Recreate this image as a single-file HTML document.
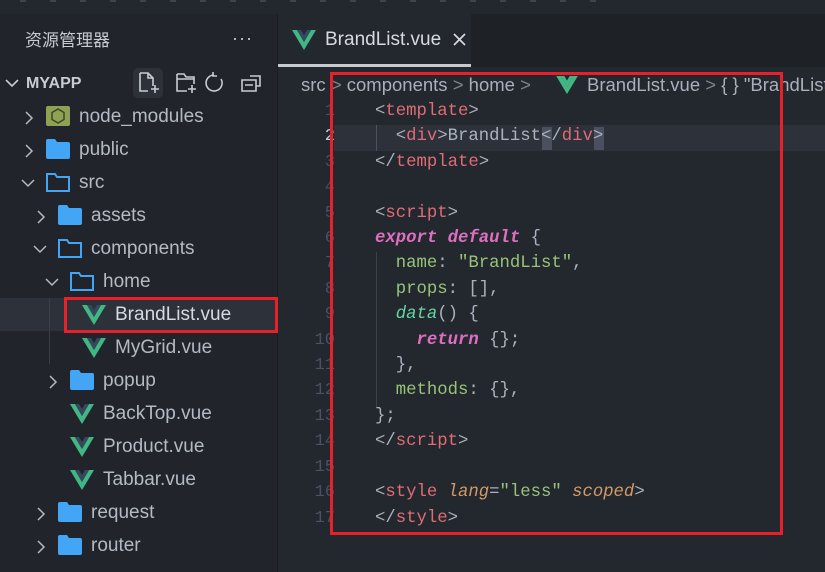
<!DOCTYPE html>
<html><head><meta charset="utf-8"><style>
*{margin:0;padding:0;box-sizing:border-box}
html,body{width:825px;height:572px;overflow:hidden}
body{background:#23272e;font-family:"Liberation Sans","Noto Sans CJK SC",sans-serif;position:relative;color:#b4bac4}
.abs{position:absolute}
#side{left:0;top:0;width:277px;height:572px;background:#21252b}
#top{left:0;top:0;width:825px;height:14px;background:#23272e}
.row{position:absolute;left:0;width:277px;height:33px;font-size:19px;line-height:33px;color:#b4bac4;white-space:nowrap}
.row svg{position:absolute}
.row span{position:absolute}
.chev{top:11px}
.code{position:absolute;left:375px;font-family:"Liberation Mono",monospace;font-size:17.3px;white-space:pre;color:#abb2bf;line-height:25.4px}
.t{color:#e06c75}.p{color:#abb2bf}.k{color:#de6fc0;font-style:italic;font-weight:bold}.g{color:#98c379}.s{color:#98c379}.a{color:#d19a66;font-style:italic}.f{color:#61d6a0;font-style:italic}
.ln{position:absolute;left:300px;width:35px;text-align:right;font-family:"Liberation Mono",monospace;font-size:17px;color:#495162;line-height:25.4px}
</style></head><body>
<div id="top" class="abs"></div>
<div class="abs" style="left:0;top:0;width:825px;height:4px;overflow:hidden"><div style="position:absolute;left:20px;top:-6px;width:600px;height:8px;background:repeating-linear-gradient(90deg,#6a707a 0 6px,transparent 6px 30px);opacity:.4"></div></div>
<div id="side" class="abs" style="top:14px;height:558px"></div>
<div class="abs" style="left:277px;top:14px;width:548px;height:53px;background:#1e2227"></div>
<div class="abs" style="left:277px;top:14px;width:1px;height:558px;background:#1a1d21"></div>
<!-- tab -->
<div class="abs" style="left:278px;top:14px;width:193px;height:53px;background:#23272e;border-bottom:3px solid #c6c9ce"></div>
<svg class="abs" style="left:292px;top:30px" width="24" height="20" viewBox="0 0 24 20"><path d="M0 0h5l7 12 7-12h5L12 20z" fill="#41b883"/><path d="M5 0h4l3 5 3-5h4l-7 12z" fill="#35495e"/></svg>
<div class="abs" style="left:325px;top:29px;font-size:19px;color:#d7dae0">BrandList.vue</div>
<svg class="abs" style="left:453px;top:33px" width="13" height="13"><path d="M1 1L12 12M12 1L1 12" stroke="#d7dae0" stroke-width="1.7"/></svg>
<!-- sidebar header -->
<div class="abs" style="left:25px;top:31px;font-size:17px;line-height:20px;color:#c8ccd2">资源管理器</div>
<div class="abs" style="left:232px;top:28px;font-size:18px;color:#c8ccd2;letter-spacing:1px">···</div>
<div class="row" style="top:67px;"><svg class="chev" style="left:4px;top:10px" width="16" height="12"><path d="M2 3l6 6 6-6" stroke="#c8ccd2" stroke-width="1.6" fill="none"/></svg><span style="left:26px;font-weight:bold;font-size:16px;color:#c8ccd2">MYAPP</span></div>
<div class="abs" style="left:133px;top:68px;width:30px;height:30px;border-radius:5px;background:#2d3139"></div>
<svg class="abs" style="left:137px;top:70px" width="130" height="26" viewBox="0 0 130 26" fill="none" stroke="#c8ccd2" stroke-width="1.6"><path d="M3 3h8l5 5v8M3 3v18h8M11 3v5h5M14 19h8M18 15v8"/><path d="M40 4h7l2 3h8v7M40 4v17h10M40 9h17M51 19h8M55 15v8"/><path d="M77 5a8 8 0 1 0 7 4M76 2v4h4" /><path d="M113 6h10v10h-4M105 10h14v11h-14zM108 15h8"/></svg>
<!-- tree -->
<div class="row" style="top:100px"><svg class="chev" style="left:24px" width="10" height="14"><path d="M2 1l6 6-6 6" stroke="#b4bac4" stroke-width="1.5" fill="none"/></svg><svg style="left:46px;top:6px" width="24" height="20"><rect width="24" height="20" rx="2" fill="#8fa155"/><path d="M12 3l6 3.5v7L12 17l-6-3.5v-7z" stroke="#3b4a1f" stroke-width="1.5" fill="none"/></svg><span style="left:79px">node_modules</span></div>
<div class="row" style="top:133px"><svg class="chev" style="left:24px" width="10" height="14"><path d="M2 1l6 6-6 6" stroke="#b4bac4" stroke-width="1.5" fill="none"/></svg><svg style="left:46px;top:6px" width="24" height="20"><path d="M0 2q0-2 2-2h7l2 3h11q2 0 2 2v13q0 2-2 2H2q-2 0-2-2z" fill="#42a5f5"/></svg><span style="left:79px">public</span></div>
<div class="row" style="top:166px"><svg class="chev" style="left:20px;top:12px" width="16" height="10"><path d="M2 2l6 6 6-6" stroke="#b4bac4" stroke-width="1.5" fill="none"/></svg><svg style="left:46px;top:6px" width="24" height="20"><path d="M1 2h8l2 3h12v14H1z" stroke="#42a5f5" stroke-width="2" fill="none"/></svg><span style="left:79px">src</span></div>
<div class="row" style="top:199px"><svg class="chev" style="left:36px" width="10" height="14"><path d="M2 1l6 6-6 6" stroke="#b4bac4" stroke-width="1.5" fill="none"/></svg><svg style="left:58px;top:6px" width="24" height="20"><path d="M0 2q0-2 2-2h7l2 3h11q2 0 2 2v13q0 2-2 2H2q-2 0-2-2z" fill="#42a5f5"/></svg><span style="left:91px">assets</span></div>
<div class="row" style="top:232px"><svg class="chev" style="left:32px;top:12px" width="16" height="10"><path d="M2 2l6 6 6-6" stroke="#b4bac4" stroke-width="1.5" fill="none"/></svg><svg style="left:58px;top:6px" width="24" height="20"><path d="M1 2h8l2 3h12v14H1z" stroke="#42a5f5" stroke-width="2" fill="none"/></svg><span style="left:91px">components</span></div>
<div class="row" style="top:265px"><svg class="chev" style="left:44px;top:12px" width="16" height="10"><path d="M2 2l6 6 6-6" stroke="#b4bac4" stroke-width="1.5" fill="none"/></svg><svg style="left:70px;top:6px" width="24" height="20"><path d="M1 2h8l2 3h12v14H1z" stroke="#42a5f5" stroke-width="2" fill="none"/></svg><span style="left:103px">home</span></div>
<div class="row" style="top:298px;background:#2c313a"><svg style="left:82px;top:7px" width="24" height="20" viewBox="0 0 24 20"><path d="M0 0h5l7 12 7-12h5L12 20z" fill="#41b883"/><path d="M5 0h4l3 5 3-5h4l-7 12z" fill="#35495e"/></svg><span style="left:115px;color:#d7dae0">BrandList.vue</span></div>
<div class="row" style="top:331px"><svg style="left:82px;top:7px" width="24" height="20" viewBox="0 0 24 20"><path d="M0 0h5l7 12 7-12h5L12 20z" fill="#41b883"/><path d="M5 0h4l3 5 3-5h4l-7 12z" fill="#35495e"/></svg><span style="left:115px">MyGrid.vue</span></div>
<div class="abs" style="left:49px;top:298px;width:1px;height:66px;background:#3a3f47"></div>
<div class="row" style="top:364px"><svg class="chev" style="left:48px" width="10" height="14"><path d="M2 1l6 6-6 6" stroke="#b4bac4" stroke-width="1.5" fill="none"/></svg><svg style="left:70px;top:6px" width="24" height="20"><path d="M0 2q0-2 2-2h7l2 3h11q2 0 2 2v13q0 2-2 2H2q-2 0-2-2z" fill="#42a5f5"/></svg><span style="left:103px">popup</span></div>
<div class="row" style="top:397px"><svg style="left:70px;top:7px" width="24" height="20" viewBox="0 0 24 20"><path d="M0 0h5l7 12 7-12h5L12 20z" fill="#41b883"/><path d="M5 0h4l3 5 3-5h4l-7 12z" fill="#35495e"/></svg><span style="left:103px">BackTop.vue</span></div>
<div class="row" style="top:430px"><svg style="left:70px;top:7px" width="24" height="20" viewBox="0 0 24 20"><path d="M0 0h5l7 12 7-12h5L12 20z" fill="#41b883"/><path d="M5 0h4l3 5 3-5h4l-7 12z" fill="#35495e"/></svg><span style="left:103px">Product.vue</span></div>
<div class="row" style="top:463px"><svg style="left:70px;top:7px" width="24" height="20" viewBox="0 0 24 20"><path d="M0 0h5l7 12 7-12h5L12 20z" fill="#41b883"/><path d="M5 0h4l3 5 3-5h4l-7 12z" fill="#35495e"/></svg><span style="left:103px">Tabbar.vue</span></div>
<div class="row" style="top:496px"><svg class="chev" style="left:36px" width="10" height="14"><path d="M2 1l6 6-6 6" stroke="#b4bac4" stroke-width="1.5" fill="none"/></svg><svg style="left:58px;top:6px" width="24" height="20"><path d="M0 2q0-2 2-2h7l2 3h11q2 0 2 2v13q0 2-2 2H2q-2 0-2-2z" fill="#42a5f5"/></svg><span style="left:91px">request</span></div>
<div class="row" style="top:529px"><svg class="chev" style="left:36px" width="10" height="14"><path d="M2 1l6 6-6 6" stroke="#b4bac4" stroke-width="1.5" fill="none"/></svg><svg style="left:58px;top:6px" width="24" height="20"><path d="M0 2q0-2 2-2h7l2 3h11q2 0 2 2v13q0 2-2 2H2q-2 0-2-2z" fill="#42a5f5"/></svg><span style="left:91px">router</span></div>
<div class="abs" style="left:64px;top:297px;width:214px;height:36px;border:3px solid #e8202a"></div>
<!-- breadcrumb -->
<div class="abs" style="left:301px;top:74px;font-size:18.5px;color:#a9b0bb;white-space:nowrap">src <span style="color:#7d838d">&gt;</span> components <span style="color:#7d838d">&gt;</span> home <span style="color:#7d838d">&gt;</span></div>
<svg class="abs" style="left:556px;top:76px" width="22" height="18" viewBox="0 0 24 20"><path d="M0 0h5l7 12 7-12h5L12 20z" fill="#41b883"/><path d="M5 0h4l3 5 3-5h4l-7 12z" fill="#41b883"/></svg>
<div class="abs" style="left:587px;top:74px;font-size:18.5px;color:#a9b0bb;white-space:nowrap">BrandList.vue <span style="color:#7d838d">&gt;</span> { } "BrandList"</div>
<!-- line numbers -->
<div class="ln" style="top:99px">1<br><span style="color:#c8ccd2">2</span><br>3<br>4<br>5<br>6<br>7<br>8<br>9<br>10<br>11<br>12<br>13<br>14<br>15<br>16<br>17</div>
<div class="abs" style="left:334px;top:125px;width:491px;height:26px;background:#2c313a"></div>
<div class="abs" style="left:376px;top:125px;width:1px;height:26px;background:#4b5160"></div>
<div class="abs" style="left:376px;top:252px;width:1px;height:155px;background:#3b404a"></div>
<div class="abs" style="left:542px;top:127px;width:10px;height:23px;background:#4a5060"></div>
<div class="abs" style="left:594px;top:127px;width:10px;height:23px;background:#4a5060"></div>
<div class="code" style="top:99px"><span class="p">&lt;</span><span class="t">template</span><span class="p">&gt;</span>
  <span class="p">&lt;</span><span class="t">div</span><span class="p">&gt;</span>BrandList<span class="p">&lt;/</span><span class="t">div</span><span class="p">&gt;</span>
<span class="p">&lt;/</span><span class="t">template</span><span class="p">&gt;</span>

<span class="p">&lt;</span><span class="t">script</span><span class="p">&gt;</span>
<span class="k">export</span> <span class="k">default</span> {
  <span class="g">name</span>: <span class="s">"BrandList"</span>,
  <span class="g">props</span>: [],
  <span class="f">data</span>() {
    <span class="k">return</span> {};
  },
  <span class="g">methods</span>: {},
};
<span class="p">&lt;/</span><span class="t">script</span><span class="p">&gt;</span>

<span class="p">&lt;</span><span class="t">style</span> <span class="a">lang</span>=<span class="s">"less"</span> <span class="a">scoped</span><span class="p">&gt;</span>
<span class="p">&lt;/</span><span class="t">style</span><span class="p">&gt;</span></div>
<div class="abs" style="left:330px;top:72px;width:453px;height:463px;border:3px solid #e8202a"></div>
</body></html>
